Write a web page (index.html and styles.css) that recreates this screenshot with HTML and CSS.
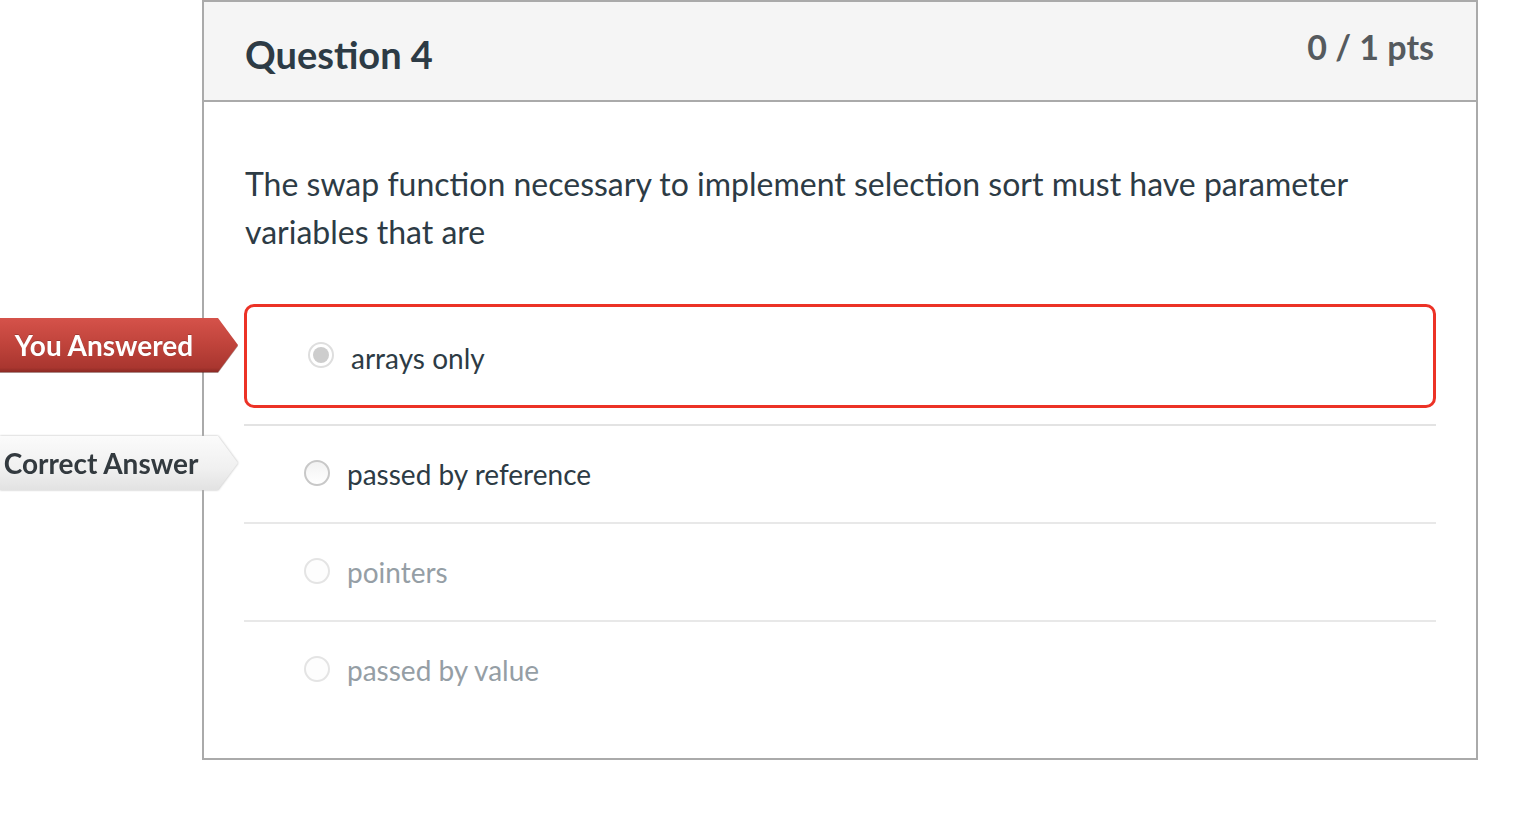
FILE: index.html
```html
<!DOCTYPE html>
<html lang="en">
<head>
<meta charset="utf-8">
<title>Question 4</title>
<link rel="stylesheet" href="styles.css">
</head>
<body>
<div class="quiz">
  <div class="card">
    <div class="card-header">
      <h2 class="q-title">Question 4</h2>
      <div class="q-points">0 / 1 pts</div>
    </div>
    <div class="card-body">
      <p class="q-text">The swap function necessary to implement selection sort must have parameter variables that are</p>
      <div class="answers">
        <div class="answer answer-wrong">
          <div class="badge-wrap"><span class="badge badge-red">You Answered</span></div>
          <span class="radio radio-selected"></span>
          <span class="answer-label">arrays only</span>
        </div>
        <div class="answer answer-correct">
          <div class="badge-wrap badge-wrap-gray"><span class="badge badge-gray">Correct Answer</span></div>
          <span class="radio"></span>
          <span class="answer-label">passed by reference</span>
        </div>
        <div class="answer answer-muted">
          <span class="radio radio-faint"></span>
          <span class="answer-label">pointers</span>
        </div>
        <div class="answer answer-muted">
          <span class="radio radio-faint"></span>
          <span class="answer-label">passed by value</span>
        </div>
      </div>
    </div>
  </div>
</div>
</body>
</html>
```

FILE: styles.css
```css
html, body {
  margin: 0;
  padding: 0;
  background: #fff;
}
body {
  font-family: Lato, "Open Sans", "Liberation Sans", sans-serif;
  color: #2d3b45;
}
.quiz {
  padding-left: 202px;
  width: 1276px;
}
.card {
  border: 2px solid #aaaaaa;
  background: #fff;
}
.card-header {
  background: #f5f5f5;
  border-bottom: 2px solid #aaaaaa;
  height: 100px;
  box-sizing: border-box;
  padding: 0 42px 0 41px;
  display: flex;
  justify-content: space-between;
  align-items: flex-start;
}
.q-title {
  margin: 0;
  padding-top: 27px;
  font-size: 38px;
  font-weight: 700;
  line-height: 50px;
  color: #2d3b45;
}
.q-points {
  padding-top: 21px;
  font-size: 34px;
  font-weight: 700;
  line-height: 48px;
  color: #555a5e;
}
.card-body {
  padding: 58px 40px 40px 40px;
}
.q-text {
  margin: 0 0 48px 1px;
  font-size: 32px;
  line-height: 48px;
  color: #2d3b45;
}
.answers {
  display: flex;
  flex-direction: column;
}
.answer {
  position: relative;
  display: flex;
  align-items: center;
  height: 98px;
  box-sizing: border-box;
  padding-left: 60px;
  border-top: 2px solid #e8e8e8;
}
.answer-wrong {
  height: 104px;
  border: 3px solid #ec3226;
  border-radius: 10px;
  padding-left: 61px;
  margin-bottom: 16px;
}
.answer-wrong + .answer {
  border-top: 2px solid #e3e3e3;
}
.answer-label {
  font-size: 28px;
  line-height: 40px;
  margin-left: 17px;
}
.answer-wrong .answer-label {
  margin-top: 4px;
}
.answer-muted .answer-label {
  color: #959ea5;
}
.radio {
  width: 22px;
  height: 22px;
  border-radius: 50%;
  border: 2px solid #c8c8c8;
  background: linear-gradient(#f2f2f2, #ffffff);
  box-sizing: content-box;
  flex: none;
  margin-top: -2px;
  position: relative;
}
.radio-selected {
  border-color: #dedede;
  background: #ffffff;
}
.radio-selected::after {
  content: "";
  position: absolute;
  left: 3px;
  top: 3px;
  width: 16px;
  height: 16px;
  border-radius: 50%;
  background: #cdcdcd;
}
.radio-faint {
  border-color: #e4e4e4;
  background: #fdfdfd;
}
.badge-wrap {
  position: absolute;
  left: -247px;
  top: 11px;
  filter: drop-shadow(0 1px 0 rgba(90,20,15,0.5));
}
.badge-wrap-gray {
  left: -244px;
  top: 10px;
  filter: drop-shadow(0 0 1px #b5b5b5);
}
.badge {
  display: block;
  width: 238px;
  height: 54px;
  box-sizing: border-box;
  padding-right: 30px;
  text-align: center;
  font-size: 28px;
  font-weight: 700;
  line-height: 54px;
  clip-path: polygon(0 0, 218px 0, 238px 50%, 218px 100%, 0 100%);
}
.badge-red {
  color: #ffffff;
  background: linear-gradient(#d5524a, #bf433b 50%, #a9362f 92%, #8c2a24);
  text-shadow: 0 -1px 0 rgba(0,0,0,0.2);
}
.badge-gray {
  color: #333a3f;
  background: linear-gradient(#fbfbfb, #f0f0f0 60%, #e2e2e2);
  padding-right: 36px;
}
```
